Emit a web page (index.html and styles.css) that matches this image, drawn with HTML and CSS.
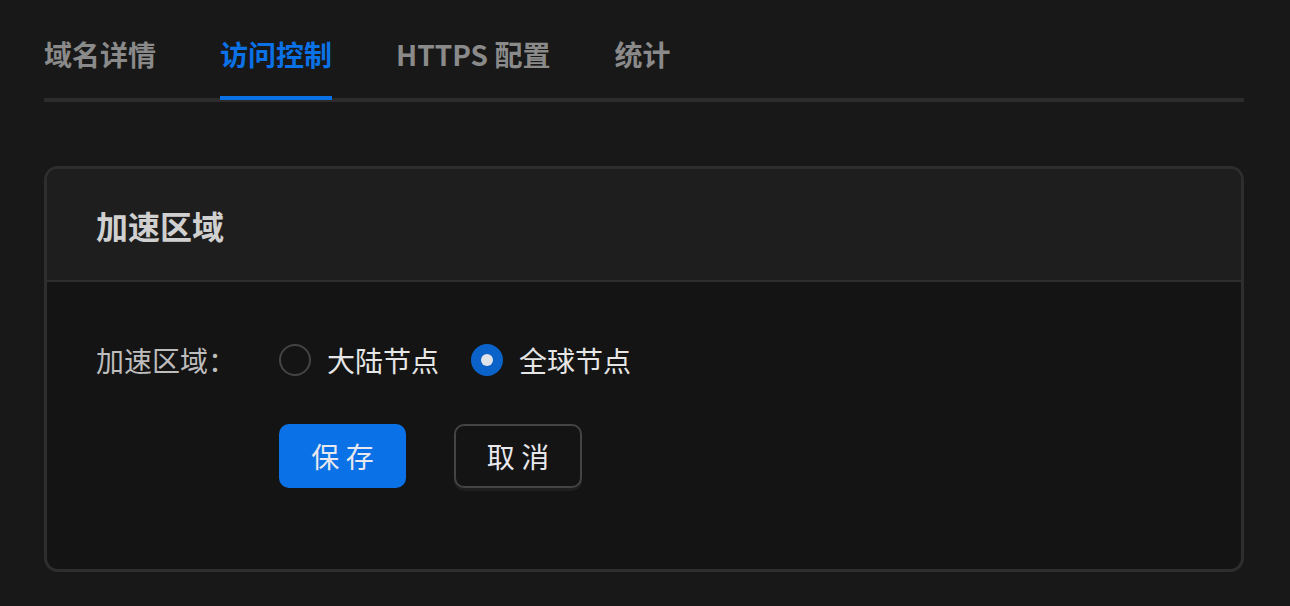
FILE: index.html
```html
<!DOCTYPE html>
<html lang="zh-CN">
<head>
<meta charset="utf-8">
<title>访问控制</title>
<link rel="stylesheet" href="styles.css">
</head>
<body>
<div class="page">
  <nav class="tabs">
    <div class="tab">域名详情</div>
    <div class="tab active">访问控制</div>
    <div class="tab">HTTPS 配置</div>
    <div class="tab">统计</div>
  </nav>
  <section class="card">
    <header class="card-head">加速区域</header>
    <div class="card-body">
      <div class="form-row">
        <div class="label">加速区域：</div>
        <div class="radios">
          <label class="radio"><span class="dot"></span><span class="rtext">大陆节点</span></label>
          <label class="radio checked"><span class="dot"></span><span class="rtext">全球节点</span></label>
        </div>
      </div>
      <div class="actions">
        <button class="btn primary">保 存</button>
        <button class="btn ghost">取 消</button>
      </div>
    </div>
  </section>
</div>
</body>
</html>
```
FILE: styles.css
```css
* { box-sizing: border-box; }
html, body { margin: 0; padding: 0; }
body {
  background: #181818;
  font-family: "Noto Sans CJK SC", "Noto Sans", sans-serif;
  color: #e6e6e6;
}
.page {
  padding: 34px 46px 0 44px;
}
.tabs {
  display: flex;
  gap: 64px;
  border-bottom: 4px solid #2c2c2c;
}
.tab {
  position: relative;
  font-size: 28px;
  line-height: 40px;
  font-weight: 700;
  color: #8a8a8a;
  padding-bottom: 24px;
  white-space: nowrap;
}
.tab.active { color: #0a72e6; }
.tab.active::after {
  content: "";
  position: absolute;
  left: 0;
  right: 0;
  bottom: -2px;
  height: 4px;
  background: #0a72e6;
}
.card {
  margin-top: 64px;
  border: 3px solid #2e2e2e;
  border-radius: 14px;
  overflow: hidden;
  background: #141414;
}
.card-head {
  height: 113px;
  padding: 0 49px;
  display: flex;
  align-items: center;
  background: #1e1e1e;
  border-bottom: 2px solid #2e2e2e;
  font-size: 32px;
  font-weight: 700;
  color: #d0d0d0;
}
.card-body {
  padding: 58px 49px 81px;
}
.form-row {
  display: flex;
  align-items: center;
  height: 40px;
}
.label {
  width: 183px;
  font-size: 28px;
  color: #bdbdbd;
}
.radios {
  display: flex;
  gap: 32px;
}
.radio {
  display: flex;
  align-items: center;
  gap: 16px;
  font-size: 28px;
  color: #e6e6e6;
}
.dot {
  width: 32px;
  height: 32px;
  border-radius: 50%;
  border: 2px solid #444;
  display: flex;
  align-items: center;
  justify-content: center;
}
.radio.checked .dot {
  background: #0b63c9;
  border-color: #0b63c9;
}
.radio.checked .dot::after {
  content: "";
  width: 12px;
  height: 12px;
  border-radius: 50%;
  background: #e2e3ea;
}
.actions {
  display: flex;
  gap: 48px;
  margin-top: 44px;
  padding-left: 183px;
}
.btn {
  width: 127px;
  height: 64px;
  border-radius: 10px;
  font-family: inherit;
  font-size: 28px;
  color: #e8e8ee;
  cursor: pointer;
  display: flex;
  align-items: center;
  justify-content: center;
}
.btn.primary {
  background: #0a72e6;
  border: none;
}
.btn.ghost {
  width: 128px;
  background: #141414;
  border: 2px solid #444;
  box-shadow: 0 3px 0 #1f1f1f;
}
```
